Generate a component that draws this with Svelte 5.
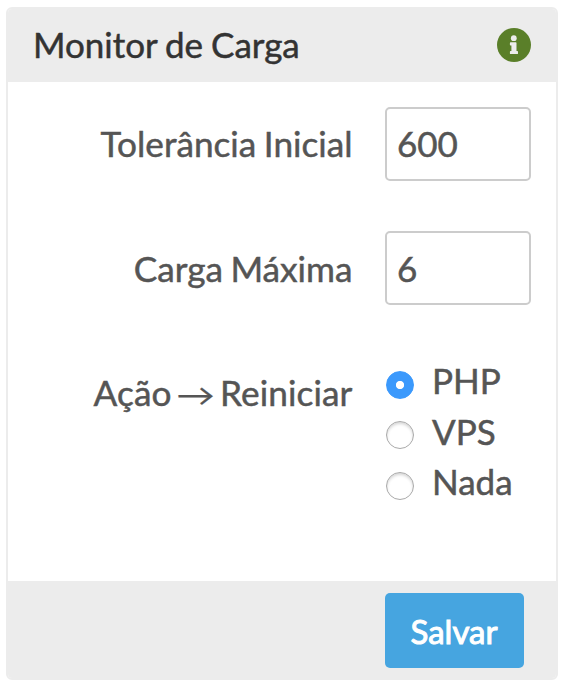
<script>
  let tolerancia = '600';
  let carga = '6';
  let acao = 'PHP';
  const acoes = ['PHP', 'VPS', 'Nada'];
</script>

<form class="panel" on:submit|preventDefault>
  <header>
    <h2>Monitor de Carga</h2>
    <svg class="info" viewBox="0 0 34 34" aria-hidden="true">
      <circle cx="17" cy="17" r="17" fill="#5a7f29" />
      <circle cx="16.8" cy="10.2" r="2.9" fill="#ececec" />
      <path d="M13.6 14.3h5.2q.7 0 .7.7v8h.8q.7 0 .7.7v1.7q0 .7-.7.7h-6.7q-.7 0-.7-.7v-1.7q0-.7.7-.7h.8v-5.6h-.8q-.7 0-.7-.7V15q0-.7.7-.7z" fill="#ececec" />
    </svg>
  </header>

  <div class="body">
    <div class="row">
      <label for="tolerancia">Tolerância Inicial</label>
      <input class="field" id="tolerancia" type="text" bind:value={tolerancia} />
    </div>
    <div class="row">
      <label for="carga">Carga Máxima</label>
      <input class="field" id="carga" type="text" bind:value={carga} />
    </div>
    <div class="row">
      <span class="label">Ação <span class="arrow">→</span> Reiniciar</span>
      <div class="options">
        {#each acoes as item}
          <label class="option">
            <input type="radio" name="acao" value={item} bind:group={acao} />
            <span>{item}</span>
          </label>
        {/each}
      </div>
    </div>
  </div>

  <footer>
    <button type="submit">Salvar</button>
  </footer>
</form>

<style>
  :global(body) {
    background: #fff;
  }

  .panel {
    box-sizing: border-box;
    width: 552px;
    height: 673px;
    margin: 7px 0 0 6px;
    border: 2px solid #ececec;
    border-radius: 6px;
    display: flex;
    flex-direction: column;
    overflow: hidden;
    font-family: Lato, sans-serif;
    font-size: 35px;
    color: #555;
    -webkit-text-stroke: .5px;
  }

  header {
    height: 73px;
    flex: none;
    box-sizing: border-box;
    display: flex;
    align-items: center;
    justify-content: space-between;
    padding: 0 25px 2px;
    background: #ececec;
  }

  h2 {
    margin: 0 0 1px;
    font-size: 35px;
    font-weight: 400;
    word-spacing: -1px;
    color: #333;
  }

  .info {
    width: 34px;
    height: 34px;
  }

  .body {
    flex: 1;
    padding-top: 25px;
  }

  .row {
    display: grid;
    grid-template-columns: 344.5px 146px;
    column-gap: 32.5px;
    height: 124px;
    line-height: 74px;
  }

  .row > label,
  .label {
    font-size: 35.2px;
    word-spacing: -1.5px;
    text-align: right;
    white-space: nowrap;
  }

  .row:first-child > label {
    line-height: 72px;
  }

  .label {
    letter-spacing: .1px;
  }

  .arrow {
    display: inline-block;
    margin: 0 -1px;
    line-height: 1;
    transform: translateY(2px) scale(1.1, .85);
    -webkit-text-stroke: .2px;
  }

  .field {
    box-sizing: border-box;
    width: 146px;
    height: 74px;
    padding: 0 10px 1px;
    border: 2px solid #ccc;
    border-radius: 5px;
    background: #fff;
    font: inherit;
    color: #555;
    -webkit-text-stroke: inherit;
  }

  #tolerancia {
    padding-bottom: 2px;
  }

  .options {
    padding-left: 1px;
  }

  .option {
    display: flex;
    align-items: center;
    gap: 18px;
    height: 50.5px;
    line-height: 50px;
  }

  .option input {
    appearance: none;
    box-sizing: border-box;
    flex: none;
    width: 28px;
    height: 28px;
    margin: 9px 0 0;
    border: 1px solid #aaa;
    border-radius: 50%;
    background: #fff;
    box-shadow: inset 0 2px 3px rgba(0, 0, 0, .16);
  }

  .option input:checked {
    border-color: #3b99fc;
    background: radial-gradient(circle, #fff 3.7px, #3b99fc 4.5px);
    box-shadow: none;
  }

  footer {
    height: 97px;
    flex: none;
    box-sizing: border-box;
    padding: 12px 0 0 377px;
    background: #ececec;
  }

  button {
    width: 139px;
    height: 75px;
    padding: 0 1px 0 0;
    border: 0;
    border-radius: 5px;
    background: #46a5e0;
    font: 400 33px Lato, sans-serif;
    color: #fff;
    -webkit-text-stroke: 1px;
  }
</style>
